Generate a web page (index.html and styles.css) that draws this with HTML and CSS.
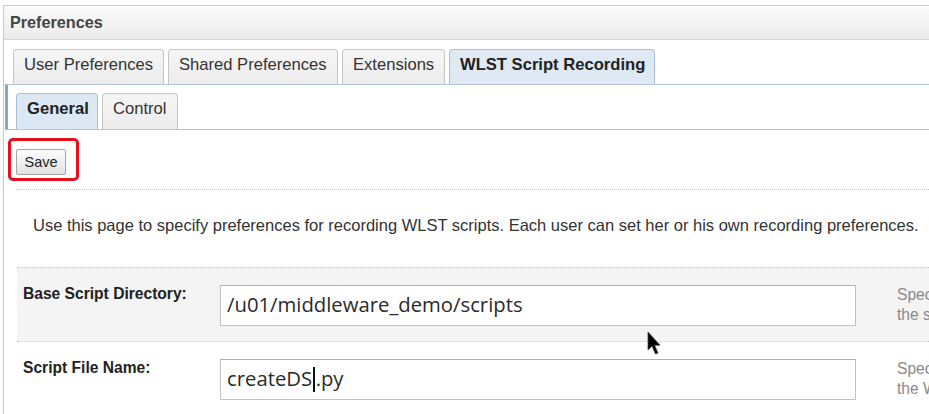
FILE: index.html
```html
<!DOCTYPE html>
<html>
<head>
<meta charset="utf-8">
<link rel="stylesheet" href="styles.css">
</head>
<body>
<div class="panel">
  <div class="header">Preferences</div>
  <div class="tabs">
    <div class="tab">User Preferences</div>
    <div class="tab">Shared Preferences</div>
    <div class="tab">Extensions</div>
    <div class="tab selected">WLST Script Recording</div>
  </div>
  <div class="subtabs">
    <div class="subtab selected">General</div>
    <div class="subtab">Control</div>
  </div>
  <div class="content">
    <div class="save-row">
      <span class="highlight"><button class="btn">Save</button></span>
    </div>
    <div class="desc">Use this page to specify preferences for recording WLST scripts. Each user can set her or his own recording preferences.</div>
    <div class="row shaded">
      <div class="label">Base Script Directory:</div>
      <div class="input">/u01/middleware_demo/scripts</div>
      <div class="help">Spec<br>the s</div>
    </div>
    <div class="row">
      <div class="label">Script File Name:</div>
      <div class="input">createDS<span class="caret"></span>.py</div>
      <div class="help">Spec<br>the W</div>
    </div>
  </div>
</div>
<svg class="cursor" width="16" height="26" viewBox="0 0 16 26">
  <path d="M1 1 L1 19 L5 15 L8.5 23 L11 22 L7.6 14.2 L13 14.2 Z" fill="#000" stroke="#444" stroke-width="0.8"/>
</svg>
</body>
</html>
```

FILE: styles.css
```css
* { box-sizing: border-box; }
html, body { margin: 0; padding: 0; background: #fff; }
body {
  width: 929px;
  height: 414px;
  overflow: hidden;
  font-family: "Liberation Sans", Arial, sans-serif;
  color: #333;
  position: relative;
}
.panel {
  margin: 5px 0 0 3px;
  border-left: 1px solid #c9c9c9;
  border-top: 1px solid #cfcfcf;
  height: 420px;
}
.header {
  height: 34px;
  background: linear-gradient(#fbfbfb, #ebebeb);
  border-bottom: 1px solid #d6d6d6;
  font-weight: bold;
  font-size: 16.2px;
  color: #444;
  padding: 7px 0 0 6px;
}
.tabs {
  display: flex;
  gap: 4px;
  padding: 9px 0 0 9px;
  border-bottom: 1px solid #b3c6d9;
}
.tab {
  height: 35px;
  padding: 5px 0 0 10px;
  font-size: 16.6px;
  color: #333;
  background: linear-gradient(#f6f6f6, #ececec);
  border: 1px solid #c6c6c6;
  border-bottom: none;
  border-radius: 4px 4px 0 0;
  white-space: nowrap;
}
.tab.selected {
  background: #dee9f4;
  border-color: #a9bfd5;
  font-weight: bold;
  color: #222;
}
.tabs .tab:nth-child(1) { width: 151px; }
.tabs .tab:nth-child(2) { width: 170px; }
.tabs .tab:nth-child(3) { width: 103px; }
.tabs .tab:nth-child(4) { width: 206px; }
.subtabs {
  display: flex;
  gap: 4px;
  height: 45px;
  padding: 8px 0 0 8px;
  margin-left: 1px;
  border-left: 3px solid #87a6c6;
  border-bottom: 1px solid #b3c6d9;
}
.subtab {
  height: 36px;
  padding: 5px 0 0 10px;
  font-size: 16.6px;
  color: #333;
  background: linear-gradient(#f6f6f6, #ececec);
  border: 1px solid #c6c6c6;
  border-bottom: none;
  border-radius: 4px 4px 0 0;
}
.subtab.selected {
  width: 82px;
  background: #dce8f3;
  border-color: #a9bfd5;
  font-weight: bold;
  color: #222;
}
.subtabs .subtab:nth-child(2) { width: 76px; }
.content {
  padding-top: 8px;
}
.save-row {
  padding-left: 4px;
  height: 51px;
}
.highlight {
  display: inline-block;
  border: 3px solid #e5101c;
  border-radius: 5px;
  padding: 8px 10px 3px 5px;
  height: 43px;
}
.btn {
  display: block;
  width: 50px;
  height: 26px;
  margin: 0;
  padding: 0;
  font-family: "Liberation Sans", Arial, sans-serif;
  font-size: 14.5px;
  color: #222;
  background: linear-gradient(#fdfdfd, #e2e2e2);
  border: 1px solid #a6a6a6;
  border-radius: 2px;
}
.desc {
  margin-left: 13px;
  border-top: 1px dotted #c4c4c4;
  height: 78px;
  padding: 26px 0 0 16px;
  font-size: 16.5px;
  color: #333;
  white-space: nowrap;
}
.row {
  margin-left: 13px;
  border-top: 1px dotted #c4c4c4;
  display: grid;
  grid-template-columns: 203px 636px 1fr;
  height: 74px;
  padding-top: 17px;
}
.row.shaded { background: #f4f4f4; }
.label {
  padding-left: 6px;
  font-weight: bold;
  font-size: 15.6px;
  color: #222;
}
.input {
  height: 41px;
  background: #fff;
  border: 1px solid #c2c2c2;
  border-top-color: #b0b0b0;
  font-family: "Open Sans", "Noto Sans", sans-serif;
  font-size: 20.3px;
  color: #2a2a2a;
  padding: 4px 0 0 6px;
  white-space: nowrap;
}
.caret {
  display: inline-block;
  width: 1.5px;
  height: 25px;
  background: #111;
  vertical-align: -6px;
  margin: 0 1px 0 1px;
}
.help {
  padding-left: 41px;
  font-size: 15.6px;
  color: #8a8a8a;
  line-height: 20px;
  white-space: nowrap;
}
.cursor {
  position: absolute;
  left: 647px;
  top: 331px;
}
```
